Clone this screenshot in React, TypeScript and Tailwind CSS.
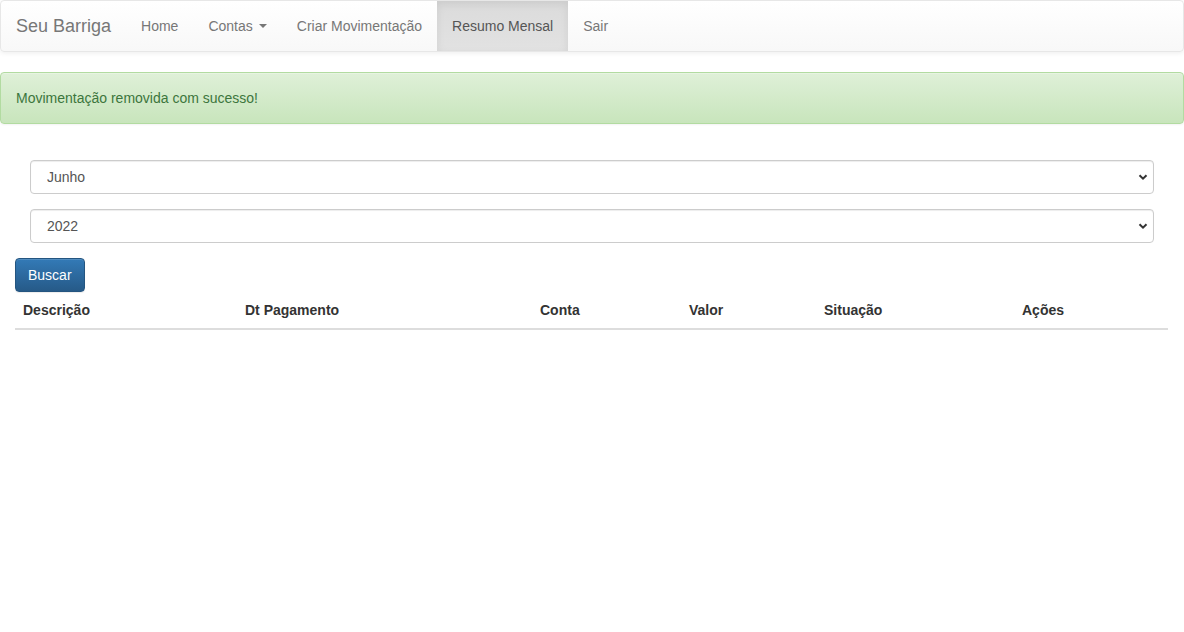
const font = { fontFamily: '"Liberation Sans", Arial, sans-serif' };

const Chevron = () => (
  <svg className="pointer-events-none absolute right-[6px] top-1/2 -translate-y-1/2" width="10" height="10" viewBox="0 0 10 10">
    <path d="M1.5 3.2 L5 6.7 L8.5 3.2" fill="none" stroke="#333" strokeWidth="2" />
  </svg>
);

const SelectBox = ({ value, options }: { value: string; options: string[] }) => (
  <div className="relative mb-[15px]">
    <select
      defaultValue={value}
      className="block h-[34px] w-full appearance-none rounded-[4px] border border-[#ccc] bg-white pl-4 pr-8 text-sm text-[#555] shadow-[inset_0_1px_1px_rgba(0,0,0,0.075)] outline-none"
    >
      {options.map((o) => (
        <option key={o}>{o}</option>
      ))}
    </select>
    <Chevron />
  </div>
);

const NavLink = ({ label, active, caret }: { label: string; active?: boolean; caret?: boolean }) => (
  <a
    className={
      "flex h-[50px] items-center px-[15px] text-sm " +
      (active
        ? "bg-gradient-to-b from-[#dbdbdb] to-[#e2e2e2] text-[#555] shadow-[inset_0_3px_9px_rgba(0,0,0,0.075)]"
        : "text-[#777]")
    }
  >
    {label}
    {caret && (
      <span className="ml-[6px] inline-block h-0 w-0 border-x-4 border-t-4 border-x-transparent border-t-[#777]" />
    )}
  </a>
);

const cols = [
  { label: "Descrição", w: "w-[222px]" },
  { label: "Dt Pagamento", w: "w-[295px]" },
  { label: "Conta", w: "w-[149px]" },
  { label: "Valor", w: "w-[135px]" },
  { label: "Situação", w: "w-[198px]" },
  { label: "Ações", w: "" },
];

export default function App() {
  return (
    <div className="min-h-[632px] bg-white text-sm text-[#333]" style={font}>
      <nav className="mb-5 flex h-[52px] items-center rounded-[4px] border border-[#e7e7e7] bg-gradient-to-b from-white to-[#f8f8f8] shadow-[inset_0_1px_0_rgba(255,255,255,0.15),0_1px_5px_rgba(0,0,0,0.075)]">
        <a className="flex h-[50px] items-center px-[15px] text-lg text-[#777]">Seu Barriga</a>
        <NavLink label="Home" />
        <NavLink label="Contas" caret />
        <NavLink label="Criar Movimentação" />
        <NavLink label="Resumo Mensal" active />
        <NavLink label="Sair" />
      </nav>

      <div className="mb-5 rounded-[4px] border border-[#b2dba1] bg-gradient-to-b from-[#dff0d8] to-[#c8e5bc] p-[15px] leading-5 text-[#3c763d] shadow-[inset_0_1px_0_rgba(255,255,255,0.25),0_1px_2px_rgba(0,0,0,0.05)]">
        Movimentação removida com sucesso!
      </div>

      <div className="px-[15px]">
        <form className="pt-4">
          <div className="px-[15px]">
            <SelectBox value="Junho" options={["Janeiro", "Fevereiro", "Março", "Abril", "Maio", "Junho", "Julho", "Agosto", "Setembro", "Outubro", "Novembro", "Dezembro"]} />
            <SelectBox value="2022" options={["2020", "2021", "2022", "2023"]} />
          </div>
          <button
            type="button"
            className="h-[34px] rounded-[4px] border border-[#245580] bg-gradient-to-b from-[#337ab7] to-[#265a88] px-3 text-sm text-white shadow-[inset_0_1px_0_rgba(255,255,255,0.15),0_1px_1px_rgba(0,0,0,0.075)]"
          >
            Buscar
          </button>
        </form>

        <div className="mr-[1px] flex border-b-2 border-[#ddd] font-bold">
          {cols.map((c) => (
            <div key={c.label} className={"p-2 leading-5 " + (c.w || "flex-1")}>
              {c.label}
            </div>
          ))}
        </div>
      </div>
    </div>
  );
}
